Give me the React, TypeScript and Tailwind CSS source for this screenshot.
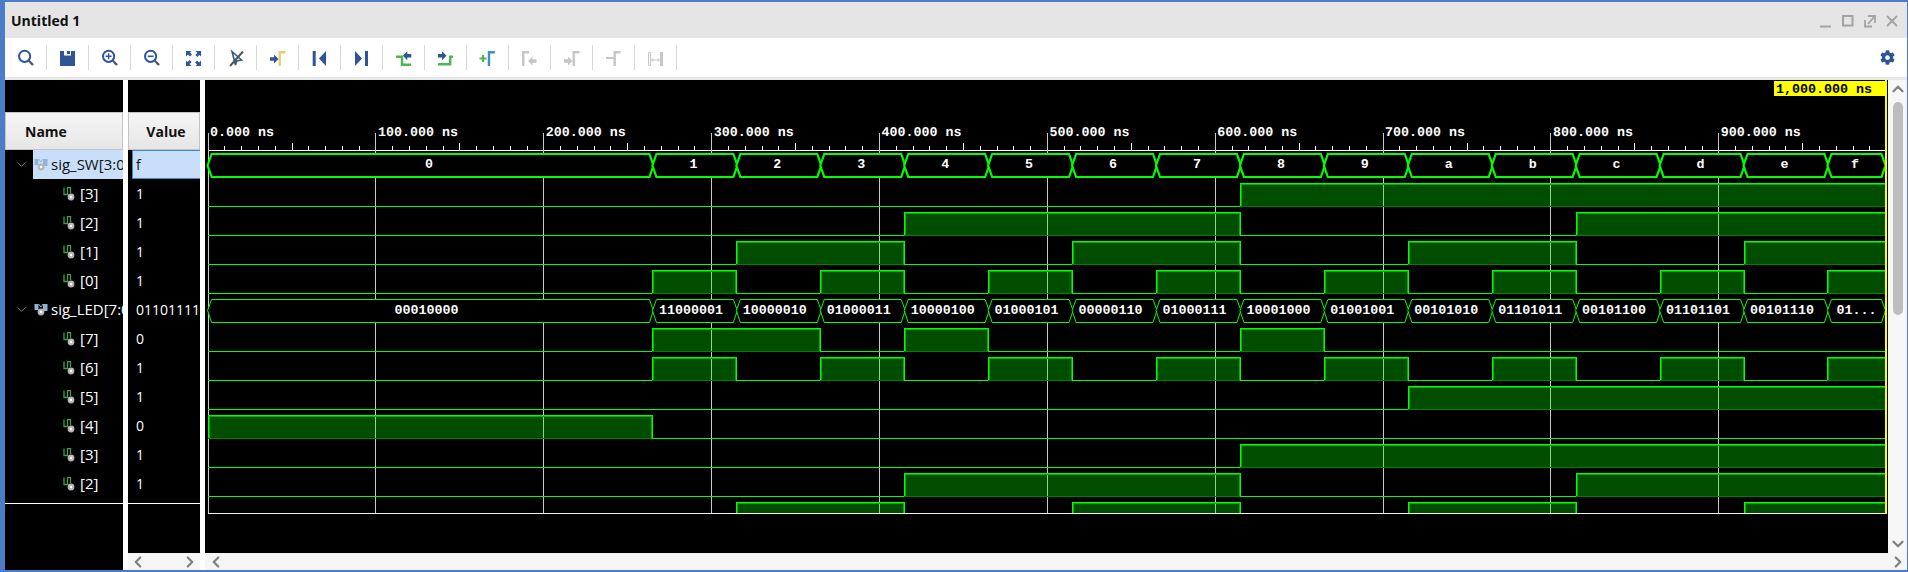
import { ReactNode } from "react";
import { ChevronLeft, ChevronRight, ChevronUp, ChevronDown } from "lucide-react";
import { FaCog } from "react-icons/fa";

const NAVY = "#2f5597";
const GREEN = "#4cb84c";
const GRAY = "#c6c6c6";
const WAVE = "#00ff00";

const px = (t: number) => 207.6 + 1.6786 * t;
const SLOTS = [0, 265, 315, 365, 415, 465, 515, 565, 615, 665, 715, 765, 815, 865, 915, 965, 1000];
const HEX = "0123456789abcdef".split("");
const LED = [
  "00010000", "11000001", "10000010", "01000011", "10000100", "01000101", "00000110", "01000111",
  "10001000", "01001001", "00101010", "01101011", "00101100", "01101101", "00101110", "01101111",
];
const sw = (k: number) => k.toString(2).padStart(4, "0");

const rows = [
  { name: "sig_SW[3:0]", value: "f", bus: true, selected: true },
  { name: "[3]", value: "1" },
  { name: "[2]", value: "1" },
  { name: "[1]", value: "1" },
  { name: "[0]", value: "1" },
  { name: "sig_LED[7:0]", value: "01101111", bus: true },
  { name: "[7]", value: "0" },
  { name: "[6]", value: "1" },
  { name: "[5]", value: "1" },
  { name: "[4]", value: "0" },
  { name: "[3]", value: "1" },
  { name: "[2]", value: "1" },
];

// bit traces: baseline y and which bit it reads
const traces = [
  { y: 206, bit: (k: number) => sw(k)[0] },
  { y: 235, bit: (k: number) => sw(k)[1] },
  { y: 264, bit: (k: number) => sw(k)[2] },
  { y: 293, bit: (k: number) => sw(k)[3] },
  { y: 351, bit: (k: number) => LED[k][0] },
  { y: 380, bit: (k: number) => LED[k][1] },
  { y: 409, bit: (k: number) => LED[k][2] },
  { y: 438, bit: (k: number) => LED[k][3] },
  { y: 467, bit: (k: number) => LED[k][4] },
  { y: 496, bit: (k: number) => LED[k][5] },
  { y: 525, bit: (k: number) => LED[k][6] },
];

// merge equal neighbouring slots into level runs
function runs(bit: (k: number) => string) {
  const out: { a: number; b: number; hi: boolean }[] = [];
  HEX.forEach((_, k) => {
    const hi = bit(k) === "1";
    const last = out[out.length - 1];
    if (last && last.hi === hi) last.b = Math.round(px(SLOTS[k + 1]));
    else out.push({ a: Math.round(px(SLOTS[k])), b: Math.round(px(SLOTS[k + 1])), hi });
  });
  return out;
}

function Ico({ children }: { children: ReactNode }) {
  return (
    <svg viewBox="0 0 20 20" className="w-5 h-5">
      {children}
    </svg>
  );
}

const Lens = ({ mark }: { mark?: ReactNode }) => (
  <Ico>
    <circle cx="9.6" cy="8.3" r="5.6" fill="none" stroke={NAVY} strokeWidth="2" />
    <path d="M13.7 12.5l1.6 1.6" stroke={NAVY} strokeWidth="2" />
    <path d="M15 14l3 3" stroke="#555" strokeWidth="2.4" />
    {mark}
  </Ico>
);

const Step = ({ x, color }: { x: number; color: string }) => (
  <path d={`M${x + 1.2} 18V4.2H${x + 7}`} fill="none" stroke={color} strokeWidth="2.4" />
);
const ArrowR = ({ x, y, color }: { x: number; y: number; color: string }) => (
  <path d={`M${x} ${y - 1.8}h4v-2.7l4.5 4.5-4.5 4.5v-2.7h-4z`} fill={color} />
);
const ArrowL = ({ x, y, color }: { x: number; y: number; color: string }) => (
  <path d={`M${x + 8.5} ${y - 1.8}h-4v-2.7l-4.5 4.5 4.5 4.5v-2.7h4z`} fill={color} />
);

const tools: ReactNode[] = [
  <Lens />,
  <Ico>
    <path d="M3 3h4v4.5h7V3h4v15H3z" fill={NAVY} />
    <path d="M10 3h3v3h-3z" fill={NAVY} />
  </Ico>,
  <Lens mark={<path d="M6.6 8.3h6M9.6 5.3v6" stroke={NAVY} strokeWidth="1.4" />} />,
  <Lens mark={<path d="M6.6 8.3h6" stroke={NAVY} strokeWidth="1.6" />} />,
  <Ico>
    <path d="M3 3h5.5L7 4.6l2 2-2 2-2-2L3 8.5zM18 3v5.5L16.4 7l-2 2-2-2 2-2L12.5 3zM3 18v-5.5L4.6 14l2-2 2 2-2 2 1.9 2zM18 18h-5.5l1.6-1.6-2-2 2-2 2 2 1.9-1.9z" fill={NAVY} />
  </Ico>,
  <Ico>
    <path d="M7 3.5l9.5 8.5-5 1-1 4z" fill="none" stroke={NAVY} strokeWidth="1.6" />
    <path d="M18 3.5L5 18" stroke="#555" strokeWidth="2" />
  </Ico>,
  <Ico>
    <ArrowR x={3} y={11} color={NAVY} />
    <Step x={11.5} color="#e6cf70" />
  </Ico>,
  <Ico>
    <path d="M3.7 3h3v15h-3zM10 10.5L17 3v15z" fill={NAVY} />
  </Ico>,
  <Ico>
    <path d="M14 3h3v15h-3zM4 3l7 7.5L4 18z" fill={NAVY} />
  </Ico>,
  <Ico>
    <path d="M3 8.7H9V16.8H18" fill="none" stroke={GREEN} strokeWidth="2.4" />
    <ArrowL x={9.8} y={7.7} color={NAVY} />
  </Ico>,
  <Ico>
    <path d="M3 16.2H15.2V8.8H18" fill="none" stroke={GREEN} strokeWidth="2.4" />
    <ArrowR x={3} y={7.7} color={NAVY} />
  </Ico>,
  <Ico>
    <path d="M2.5 10.5h7M6 7v7" stroke={GREEN} strokeWidth="2.2" />
    <Step x={10.8} color="#3d8fc4" />
  </Ico>,
  <Ico>
    <Step x={3} color={GRAY} />
    <ArrowL x={9} y={13} color={GRAY} />
  </Ico>,
  <Ico>
    <ArrowR x={3} y={13} color={GRAY} />
    <Step x={11.5} color={GRAY} />
  </Ico>,
  <Ico>
    <path d="M3 10h8" stroke={GRAY} strokeWidth="2" />
    <Step x={10.5} color={GRAY} />
  </Ico>,
  <Ico>
    <path d="M3.5 4.5h2v13h-2z" fill="none" stroke={GRAY} />
    <path d="M15 4h3v14h-3z" fill={GRAY} />
    <path d="M6.5 12h8M8.5 10.2L6.5 12l2 1.8M12.5 10.2l2 1.8-2 1.8" fill="none" stroke={GRAY} />
  </Ico>,
];

function BusIcon() {
  return (
    <svg viewBox="0 0 14 14" className="w-[14px] h-[14px] shrink-0">
      <path d="M0.5 1h4v6h-4zM9 1h4.5v7H9z" fill="#8fb4d6" />
      <path d="M4.5 1l2.5 3 2-3" fill="none" stroke="#8fb4d6" />
      <circle cx="7" cy="9" r="3.4" fill="#b5b5b5" />
      <circle cx="7" cy="9" r="1.3" fill="#fff" />
    </svg>
  );
}

function BitIcon() {
  return (
    <svg viewBox="0 0 12 14" className="w-3 h-[14px] shrink-0">
      <path d="M1 0.5V7.5H4.5V0.5H7.5V6" fill="none" stroke="#3f9f4a" strokeWidth="1.3" />
      <circle cx="8" cy="10" r="3.4" fill="#b5b5b5" />
      <circle cx="8" cy="10" r="1.3" fill="#fff" />
    </svg>
  );
}

function NameRow({ name, bus, selected }: { name: string; bus?: boolean; selected?: boolean }) {
  if (!bus) {
    return (
      <div className="h-[29px] flex items-center gap-[5px] pl-[58px] text-white">
        <BitIcon />
        <span>{name}</span>
      </div>
    );
  }
  return (
    <div className="h-[29px] flex items-center">
      <div className="w-[28px] flex justify-center pl-[4px] text-[#808080]">
        <ChevronDown size={15} strokeWidth={1.6} />
      </div>
      <div className={`flex-1 min-w-0 h-full flex items-center gap-[3px] pl-[1px] overflow-hidden whitespace-nowrap ${selected ? "bg-[#c9def9] text-[#111]" : "text-white"}`}>
        <BusIcon />
        <span>{name}</span>
      </div>
    </div>
  );
}

const waveText = "font-['Liberation_Mono',monospace] text-[13.33px] font-bold";

function Waves() {
  const ticks = [];
  for (let i = 0; i < 100; i++) {
    if (i % 10 === 0) continue;
    ticks.push(<line key={i} x1={Math.round(px(i * 10)) + 0.5} x2={Math.round(px(i * 10)) + 0.5} y1={i % 5 === 0 ? 143 : 146} y2={150} stroke="#fff" />);
  }

  return (
    <svg viewBox="205 80 1683 473" className="block w-[1683px] h-[473px]" shapeRendering="crispEdges">
      <rect x="205" y="80" width="1683" height="473" fill="#000" />

      {/* ruler */}
      <line x1="208" x2="1885" y1="150.5" y2="150.5" stroke="#fff" />
      {ticks}
      {Array.from({ length: 10 }).map((_, i) => (
        <g key={i}>
          <line x1={Math.round(px(i * 100)) + 0.5} x2={Math.round(px(i * 100)) + 0.5} y1={133} y2={513} stroke="#c8c8c8" />
          <text x={px(i * 100) + 2.5} y={136} className={`fill-white ${waveText}`} textRendering="geometricPrecision">
            {i * 100}.000 ns
          </text>
        </g>
      ))}

      {/* bit traces */}
      <svg x="205" y="80" width="1680" height="433" viewBox="205 80 1680 433">
        {traces.map((tr) =>
          runs(tr.bit).map(({ a, b, hi }) =>
            hi ? (
              <g key={`${tr.y}-${a}`}>
                <rect x={a} y={tr.y - 23} width={b - a} height={23} fill={WAVE} fillOpacity="0.3" />
                <line x1={a} x2={b} y1={tr.y + 0.5} y2={tr.y + 0.5} stroke="#008000" />
                <path d={`M${a + 1.5} ${tr.y}V${tr.y - 21.5}H${b - 0.5}V${tr.y}`} fill="none" stroke="#00b000" />
                <path d={`M${a + 0.5} ${tr.y}V${tr.y - 22.5}H${b + 0.5}V${tr.y}`} fill="none" stroke={WAVE} />
              </g>
            ) : (
              <line key={`${tr.y}-${a}`} x1={a} x2={b} y1={tr.y + 0.5} y2={tr.y + 0.5} stroke={WAVE} />
            )
          )
        )}
      </svg>

      {/* buses */}
      {HEX.map((h, k) => {
        const a = px(SLOTS[k]) + 0.5;
        const b = Math.min(px(SLOTS[k + 1]) + 0.5, 1885);
        const mid = (a + b) / 2;
        const label = k === 15 ? "01..." : LED[k];
        return (
          <g key={h} shapeRendering="auto">
            <path d={`M${a - 0.5} 165.5L${a + 3.5} 154H${b - 3.5}L${b + 0.5} 165.5L${b - 3.5} 177H${a + 3.5}z`} fill="#000" stroke={WAVE} strokeWidth="2.2" />
            <path d={`M${a - 0.5} 310.5L${a + 3.5} 299.5H${b - 3.5}L${b + 0.5} 310.5L${b - 3.5} 322.5H${a + 3.5}z`} fill="#000" stroke={WAVE} />
            <text x={mid - 1.5} y={168} textAnchor="middle" className={`fill-white ${waveText}`}>
              {h}
            </text>
            <text x={k === 15 ? mid : mid - 4} y={314} textAnchor="middle" className={`fill-white ${waveText}`}>
              {label}
            </text>
          </g>
        );
      })}

      {/* plot frame and cursor */}
      <line x1="208" x2="1886" y1="513.5" y2="513.5" stroke="#f0f0f0" />
      <rect x="1885" y="80" width="2" height="434" fill="#ffff00" />
      <rect x="1774" y="81" width="112" height="15" fill="#ffff00" />
      <text x="1776" y="92.5" className={`fill-black ${waveText}`}>
        1,000.000 ns
      </text>
    </svg>
  );
}

export default function App() {
  return (
    <div className="w-[1908px] h-[572px] flex flex-col bg-white border-t-2 border-b-2 border-l-[5px] border-r border-[#4a7cc9] overflow-hidden font-['Open_Sans',sans-serif] text-[14px]">
      {/* Title bar */}
      <div className="h-[36px] shrink-0 bg-[#e5e5e5] flex items-center justify-between pl-[6px] pr-[9px]">
        <span className="font-bold text-[#111] text-[14px]">Untitled 1</span>
        <svg viewBox="0 0 78 14" className="w-[78px] h-[14px] mt-[1px]" fill="none" stroke="#a3a3a3" strokeWidth="2">
          <path d="M0 12.5h11" />
          <path d="M23 2h9.5v9.5H23z" />
          <path d="M45 6v6.5h7M48 2h7v7M48 10l6-7" strokeWidth="1.8" />
          <path d="M67 2l10 10M77 2L67 12" />
        </svg>
      </div>

      {/* Toolbar */}
      <div className="h-[39px] shrink-0 flex items-center justify-between pr-[12px]">
        <div className="flex items-center">
          {tools.map((icon, i) => (
            <div key={i} className="w-[42px] h-[25px] pr-[1px] flex items-center justify-center border-r border-[#d8d8d8]">
              {icon}
            </div>
          ))}
        </div>
        <FaCog size={15} color={NAVY} />
      </div>
      <div className="h-[3px] shrink-0 bg-[#e8e8e8]" />

      {/* Panels */}
      <div className="flex-1 min-h-0 flex">
        {/* Name column */}
        <div className="w-[118px] shrink-0 bg-black flex flex-col text-[15px]">
          <div className="h-[32px] shrink-0" />
          <div className="h-[38px] shrink-0 bg-gradient-to-b from-[#f6f6f6] to-[#e6e6e6] border border-[#c4c4c4] flex items-center pl-[19px] font-bold text-[#111] text-[14px]">
            Name
          </div>
          {rows.map((r, i) => (
            <NameRow key={i} name={r.name} bus={r.bus} selected={r.selected} />
          ))}
          <div className="h-px bg-white mt-[5px]" />
        </div>

        {/* Value column */}
        <div className="w-[72px] ml-[5px] shrink-0 flex flex-col">
          <div className="flex-1 min-h-0 bg-black flex flex-col">
            <div className="h-[32px] shrink-0" />
            <div className="h-[38px] shrink-0 bg-gradient-to-b from-[#f6f6f6] to-[#e6e6e6] border border-[#c4c4c4] flex items-center justify-center pl-[4px] font-bold text-[#111] text-[14px]">
              Value
            </div>
            {rows.map((r, i) => (
              <div key={i} className="h-[29px] flex items-center text-white overflow-hidden whitespace-nowrap">
                {r.selected ? (
                  <div className="ml-[4px] flex-1 h-full flex items-center pl-[3px] bg-[#c9def9] text-[#111] border-y border-l border-[#3a8ad0]">
                    {r.value}
                  </div>
                ) : (
                  <span className="pl-[8px]">{r.value}</span>
                )}
              </div>
            ))}
            <div className="h-px bg-white mt-[5px]" />
          </div>
          <div className="h-[17px] shrink-0 bg-[#f5f5f5] flex items-center justify-between px-[1px] text-[#808080]">
            <ChevronLeft size={18} strokeWidth={3} />
            <ChevronRight size={18} strokeWidth={3} />
          </div>
        </div>

        {/* Waveform */}
        <div className="flex-1 min-w-0 ml-[5px] flex flex-col">
          <div className="flex flex-1 min-h-0">
            <Waves />
            <div className="w-[19px] flex flex-col items-center bg-[#f7f7f7] text-[#808080]">
              <ChevronUp size={18} strokeWidth={3} />
              <div className="w-[10px] h-[213px] mt-[4px] rounded-[5px] bg-[#bdbdbd]" />
              <div className="flex-1" />
              <ChevronDown size={18} strokeWidth={3} />
            </div>
          </div>
          <div className="h-[17px] shrink-0 bg-[#f5f5f5] flex items-center justify-between pl-[2px] text-[#808080]">
            <ChevronLeft size={18} strokeWidth={3} />
            <ChevronRight size={18} strokeWidth={3} />
          </div>
        </div>
      </div>
    </div>
  );
}
